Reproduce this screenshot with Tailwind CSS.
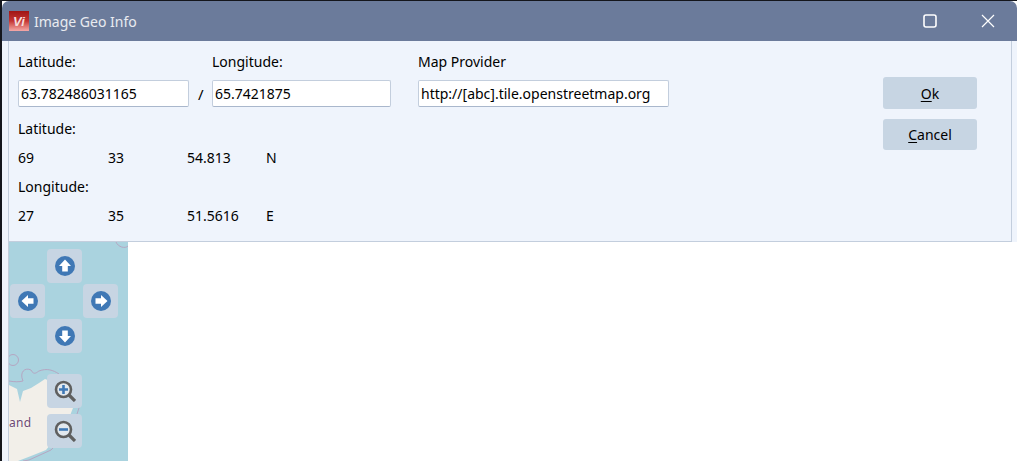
<!DOCTYPE html>
<html lang="en">
<head>
    <meta charset="UTF-8">
    <title>Image Geo Info</title>
    <script src="https://cdn.jsdelivr.net/npm/@tailwindcss/browser@4"></script>
</head>
<body class="bg-white overflow-hidden">
    <div class="relative w-[1017px] h-[461px] overflow-hidden bg-white font-['Noto_Sans',sans-serif] text-[14px] text-black">
        <!-- Desktop edge behind the window -->
        <div class="absolute left-0 top-0 bottom-0 w-[2px] bg-[#14161c]"></div>
        <div class="absolute left-0 top-0 right-0 h-[1px] bg-[#14161c]"></div>

        <div class="flex flex-col pl-[2px] pt-[1px]">
            <!-- Title bar -->
            <div class="h-[40px] bg-[#6b7b9b] rounded-t-[7px] flex items-center pl-[7px] text-white/85">
                <div class="w-[20px] h-[20px] flex items-center justify-center bg-gradient-to-b from-[#a01414] via-[#c43434] to-[#f4a8a8] text-[#f6dcdc] font-bold italic text-[13px] leading-none font-['Liberation_Sans',sans-serif]">Vi</div>
                <span class="ml-[5px] text-[14px]">Image Geo Info</span>
                <div class="ml-auto flex items-center">
                    <svg width="14" height="14" viewBox="0 0 14 14" class="mr-[44px]" fill="none" stroke="white" stroke-width="1.6"><rect x="1" y="1" width="12" height="12" rx="2"/></svg>
                    <svg width="14" height="14" viewBox="0 0 14 14" class="mr-[22px]" fill="none" stroke="white" stroke-width="1.2"><path d="M1 1 L13 13 M13 1 L1 13"/></svg>
                </div>
            </div>

            <!-- Dialog body -->
            <div class="flex bg-[#eff4fc]">
                <div class="w-[6px] shrink-0 bg-[#eff4fc]"></div>
                <div class="w-[1004px] h-[201px] flex justify-between border-l border-r border-b border-[#c3cedd] pl-[9px]">
                    <div class="flex flex-col">
                        <div class="flex mt-[11px]">
                            <div class="flex flex-col w-[194px]">
                                <label class="h-[19px] leading-[19px]">Latitude:</label>
                                <input value="63.782486031165" class="w-[171px] h-[27px] mt-[9px] px-[2px] bg-white border border-[#c3cedd] border-b-[#a9b7cc] rounded-[2px]">
                            </div>
                            <div class="flex flex-col w-[206px]">
                                <label class="h-[19px] leading-[19px]">Longitude:</label>
                                <input value="65.7421875" class="w-[179px] h-[27px] mt-[9px] px-[2px] bg-white border border-[#c3cedd] border-b-[#a9b7cc] rounded-[2px]">
                            </div>
                            <div class="flex flex-col">
                                <label class="h-[19px] leading-[19px]">Map Provider</label>
                                <input value="http://[abc].tile.openstreetmap.org" class="w-[251px] h-[27px] mt-[9px] px-[2px] bg-white border border-[#c3cedd] border-b-[#a9b7cc] rounded-[2px]">
                            </div>
                        </div>
                        <div class="mt-[12px] h-[19px] leading-[19px]">Latitude:</div>
                        <div class="grid grid-cols-[90px_79px_79px_20px] mt-[10px] h-[19px] leading-[19px]">
                            <span>69</span><span>33</span><span>54.813</span><span>N</span>
                        </div>
                        <div class="mt-[10px] h-[19px] leading-[19px]">Longitude:</div>
                        <div class="grid grid-cols-[90px_79px_79px_20px] mt-[10px] h-[19px] leading-[19px]">
                            <span>27</span><span>35</span><span>51.5616</span><span>E</span>
                        </div>
                    </div>
                    <div class="flex flex-col w-[94px] mr-[34px] mt-[36px] gap-[10px]">
                        <button class="h-[32px] bg-[#c7d5e3] rounded-[3px]"><span class="underline underline-offset-2">O</span>k</button>
                        <button class="h-[31px] bg-[#c7d5e3] rounded-[3px]"><span class="underline underline-offset-2">C</span>ancel</button>
                    </div>
                </div>
            </div>

            <!-- Map area under the dialog -->
            <div class="flex h-[219px]">
                <div class="w-[7px] shrink-0 bg-[#eff4fc] border-r border-[#c3cedd]"></div>
                <div class="relative w-[119px] bg-[#aad3df] overflow-hidden">
                    <svg class="absolute inset-0" width="119" height="219" viewBox="0 0 119 219" fill="none">
                        <path d="M0 143 L8 147 L11 160 L14 149 L22 146 L30 141 L36 137 L44 140 L56 146 L64 166 L60 176 L50 192 L37 208 L22 214 L9 219 L0 219 Z" fill="#f2efe9"/>
                        <path d="M0 139 C6 140 10 140 14 139 C10 130 16 125 22 128 C25 134 28 130 30 129 C38 126 44 128 50 132 M68 152 L70 166 L68 172 M60 190 L42 208 L20 218 L14 219" stroke="#b5a6c2" stroke-width="1"/>
                        <circle cx="4" cy="118" r="5.5" stroke="#b5a6c2"/>
                        <path d="M107 0 C109 5 116 7 119 4" stroke="#b5a6c2"/>
                    </svg>
                    <span class="absolute left-0 top-[175px] text-[12px] leading-none tracking-[0.3px] text-[#6e4a74] [text-shadow:0_0_2px_white]">and</span>

                    <!-- Pan buttons -->
                    <div class="absolute left-[38px] top-[7px] w-[35px] h-[34px] rounded-[4px] bg-[#c7d5e3] flex items-center justify-center">
                        <svg width="20" height="20" viewBox="0 0 20 20"><circle cx="10" cy="10" r="10" fill="#3f78b5"/><path d="M10 3.5 L16 10 L12.8 10 L12.8 15.5 L7.2 15.5 L7.2 10 L4 10 Z" fill="white"/></svg>
                    </div>
                    <div class="absolute left-[1px] top-[42px] w-[35px] h-[34px] rounded-[4px] bg-[#c7d5e3] flex items-center justify-center">
                        <svg width="20" height="20" viewBox="0 0 20 20"><circle cx="10" cy="10" r="10" fill="#3f78b5"/><path d="M3.5 10 L10 4 L10 7.2 L15.5 7.2 L15.5 12.8 L10 12.8 L10 16 Z" fill="white"/></svg>
                    </div>
                    <div class="absolute left-[74px] top-[42px] w-[35px] h-[34px] rounded-[4px] bg-[#c7d5e3] flex items-center justify-center">
                        <svg width="20" height="20" viewBox="0 0 20 20"><circle cx="10" cy="10" r="10" fill="#3f78b5"/><path d="M16.5 10 L10 4 L10 7.2 L4.5 7.2 L4.5 12.8 L10 12.8 L10 16 Z" fill="white"/></svg>
                    </div>
                    <div class="absolute left-[38px] top-[77px] w-[35px] h-[34px] rounded-[4px] bg-[#c7d5e3] flex items-center justify-center">
                        <svg width="20" height="20" viewBox="0 0 20 20"><circle cx="10" cy="10" r="10" fill="#3f78b5"/><path d="M10 16.5 L16 10 L12.8 10 L12.8 4.5 L7.2 4.5 L7.2 10 L4 10 Z" fill="white"/></svg>
                    </div>

                    <!-- Zoom buttons -->
                    <div class="absolute left-[38px] top-[132px] w-[35px] h-[34px] rounded-[4px] bg-[#c7d5e3] flex items-center justify-center">
                        <svg width="22" height="22" viewBox="0 0 22 22" fill="none"><path d="M15 15 L21 21" stroke="#5f5f5f" stroke-width="3.2"/><circle cx="9.5" cy="9.5" r="7.5" fill="#e2e8ee" stroke="#5f5f5f" stroke-width="2.6"/><path d="M5 9.5 H14 M9.5 5 V14" stroke="#3f78b5" stroke-width="2.6"/></svg>
                    </div>
                    <div class="absolute left-[38px] top-[172px] w-[35px] h-[34px] rounded-[4px] bg-[#c7d5e3] flex items-center justify-center">
                        <svg width="22" height="22" viewBox="0 0 22 22" fill="none"><path d="M15 15 L21 21" stroke="#5f5f5f" stroke-width="3.2"/><circle cx="9.5" cy="9.5" r="7.5" fill="#e2e8ee" stroke="#5f5f5f" stroke-width="2.6"/><path d="M5 9.5 H14" stroke="#3f78b5" stroke-width="2.6"/></svg>
                    </div>
                </div>
            </div>
        </div>

        <!-- Slash between the coordinate fields -->
        <span class="absolute left-[198px] top-[84px] text-[15px] leading-[20px]">/</span>
    </div>
</body>
</html>
